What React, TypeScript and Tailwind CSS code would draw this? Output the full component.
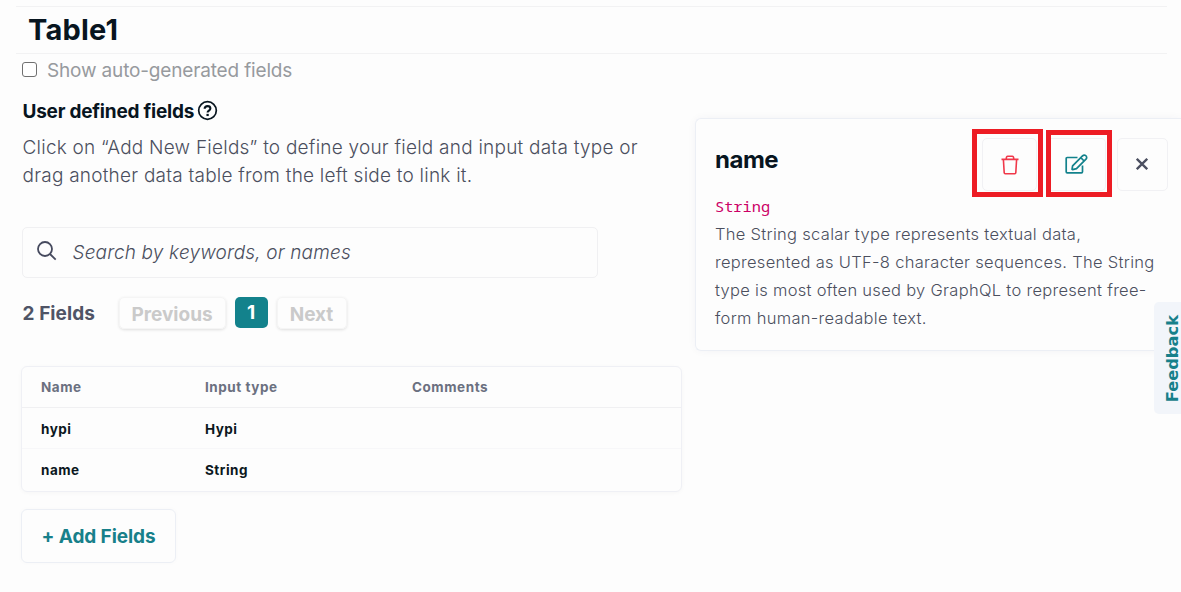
import React from "react";

const rows = [
  { name: "hypi", type: "Hypi" },
  { name: "name", type: "String" },
];

function HelpIcon() {
  return (
    <svg className="ml-[2px] -mt-[3px] size-[23px] text-[#08151f]" viewBox="0 0 24 24" fill="none" stroke="currentColor">
      <circle cx="12" cy="12" r="9.200" strokeWidth="1.8" />
      <path d="M9 10.100c0-1.600 1.200-2.700 3-2.700s3 1 3 2.500c0 2.300-2.900 2.100-2.900 4.300" strokeWidth="2.200" />
      <path d="M12.100 15.500v2.300" strokeWidth="2.400" />
    </svg>
  );
}

function SearchIcon() {
  return (
    <svg className="-mt-[3px] size-[20px] shrink-0 text-[#464a5e]" viewBox="0 0 20 20" fill="none" stroke="currentColor" strokeWidth="1.8">
      <circle cx="8" cy="8" r="7" />
      <path d="M13 13 18.700 18.700" />
    </svg>
  );
}

function TrashIcon() {
  return (
    <svg className="h-[20px] w-[18px] text-[#f0384a]" viewBox="0 0 18 20" fill="none" stroke="currentColor" strokeWidth="1.6">
      <path d="M.5 4.400h17M5.200 4.400q0-3.200 1.500-3.200h4.600q1.500 0 1.500 3.200M2.400 4.500l.8 13.200q.1 1 1 1h9.600q.9 0 1-1l.8-13.200" />
    </svg>
  );
}

function EditIcon() {
  return (
    <svg className="-mt-px h-[20px] w-[23px] text-[#13828c]" viewBox="0 0 23 20" fill="none" stroke="currentColor" strokeWidth="1.7" strokeLinejoin="round">
      <path d="M12.500 3.500H2.200q-1 0-1 1v13.300q0 1 1 1h14.300q1 0 1-1V11.500" />
      <path d="m7.600 11.800 9.900-9.900q1.200-1.200 2.600-.7 1.600.7 1.600 2.200 0 1-.7 1.700l-9.500 9.500-3.900 1q-.6 0-.5-.6zM15.800 3.700l3.300 3.300" />
    </svg>
  );
}

function CloseIcon() {
  return (
    <svg className="-mt-px size-[12px] text-[#4b4f60]" viewBox="0 0 12 12" fill="none" stroke="currentColor" strokeWidth="2.300">
      <path d="m.8.8 10.400 10.400M11.200.8.8 11.200" />
    </svg>
  );
}

function FieldTable() {
  return (
    <div className="mt-[37px] ml-[21px] h-[126px] w-[661px] rounded-md border border-[#eff0f5] shadow-[0_1px_4px_rgba(0,0,0,0.03)]">
      <div className="grid h-[41px] grid-cols-[164px_207px_1fr] items-center border-b border-[#f0f0f2] pl-[19px] text-[13.500px] font-bold tracking-[0.550px] text-[#6b7080]">
        <span>Name</span>
        <span>Input type</span>
        <span>Comments</span>
      </div>
      {rows.map((row) => (
        <div key={row.name} className="grid h-[41px] grid-cols-[164px_207px_1fr] items-center border-b border-[#f7f7f9] pt-[2px] pl-[19px] text-[13.500px] font-bold tracking-[0.500px] text-[#0b1720] last:border-b-0">
          <span>{row.name}</span>
          <span>{row.type}</span>
          <span />
        </div>
      ))}
    </div>
  );
}

function DetailCard() {
  return (
    <section className="mt-[32px] flex h-[233px] flex-1 flex-col rounded-l-md border border-r-0 border-[#eceff5] pl-[19px] shadow-[0_0_9px_rgba(30,40,90,0.045)]">
      <div className="flex h-[77px] items-start">
        <h2 className="mt-[24px] w-[257px] shrink-0 text-[24px] leading-[34px] font-bold tracking-[-0.500px] text-[#08151f]">name</h2>
        <div className="mt-[10px] flex h-[68px] w-[71px] shrink-0 border-[5px] border-[#ed1c24] pt-[4px] pl-[5px]">
          <button aria-label="Delete" className="flex h-[53px] w-[55px] items-center justify-center rounded-[5px] border border-[#f1f1f4]"><TrashIcon /></button>
        </div>
        <div className="mt-[11px] ml-[3px] flex h-[67px] w-[66px] shrink-0 border-[5px] border-[#ed1c24] pt-[3px]">
          <button aria-label="Edit" className="flex h-[53px] w-[55px] items-center justify-center rounded-r-[5px] border border-l-0 border-[#f1f1f4] pr-[3px]"><EditIcon /></button>
        </div>
        <button aria-label="Close" className="mt-[19px] ml-[5px] flex h-[53px] w-[51px] shrink-0 items-center justify-center rounded-[5px] border border-[#f1f1f4] pr-[2px]"><CloseIcon /></button>
      </div>
      <code className="block h-[24px] font-['Noto_Sans_Mono','DejaVu_Sans_Mono',monospace] text-[15.300px] leading-[20px] text-[#cc0066]">String</code>
      <p className="text-[16.500px] leading-[28px] font-light tracking-[0.300px] whitespace-nowrap text-[#4b4f5e]">
        The String scalar type represents textual data,<br />
        represented as UTF-8 character sequences. The String<br />
        type is most often used by GraphQL to represent free-<br />
        form human-readable text.
      </p>
    </section>
  );
}

export default function App() {
  return (
    <main className="relative h-[592px] w-[1181px] overflow-hidden bg-[#fdfdfd] pt-[6px] font-['Inter','Liberation_Sans',sans-serif]">
      <header className="mr-[14px] ml-4 flex h-[48px] items-center border-y border-[#f2f2f3] pb-[2px] pl-[12px]">
        <h1 className="text-[29px] leading-none font-bold tracking-[0.200px] text-[#08151f]">Table1</h1>
      </header>
      <label className="ml-[22px] flex h-[32px] items-center text-[19px] tracking-[-0.160px] text-[#979a9e]">
        <input type="checkbox" className="mt-[-2px] mr-[10px] h-[15px] w-[15px] appearance-none rounded-[3px] border border-[#707070] bg-white" />
        <span className="mt-[2px]">Show auto-generated fields</span>
      </label>
      <div className="flex items-start">
        <div className="w-[695px] shrink-0">
          <div className="ml-[23px] flex h-[48px] items-center pt-[4px] text-[19px] font-bold text-[#08151f]">
            <h3 className="-ml-[0.500px] tracking-[-0.220px]">User defined fields</h3><HelpIcon />
          </div>
          <p className="ml-[22.500px] text-[19px] leading-[28px] font-light tracking-[0.230px] whitespace-nowrap text-[#4b4f5e]">
            Click on “Add New Fields” to define your field and input data type or<br />
            drag another data table from the left side to link it.
          </p>
          <div className="mt-[37px] ml-[22px] flex h-[51px] w-[576px] items-center rounded-[5px] border border-[#f0f0f2] pl-[14px]">
            <SearchIcon />
            <span className="mt-px ml-[15.500px] text-[19px] font-light tracking-[0.170px] text-[#4b4f5e] italic">Search by keywords, or names</span>
          </div>
          <div className="mt-[18px] ml-[22.500px] flex h-[33px] items-center text-[19px] font-bold">
            <span className="w-[96px] pt-[3px] tracking-[0.080px] text-[#4f5466]">2 Fields</span>
            <button className="h-[32px] w-[107px] rounded-[5px] border border-[#f5f5f5] pt-[3px] text-[#cacaca] shadow-[0_1px_3px_rgba(0,0,0,0.12)]">Previous</button>
            <button className="ml-[9px] h-[31px] w-[33px] rounded-[5px] bg-[#13828c] pt-[2px] text-white">1</button>
            <button className="ml-[9px] h-[32px] w-[70px] rounded-[5px] border border-[#f5f5f5] pt-[3px] text-[#cacaca] shadow-[0_1px_3px_rgba(0,0,0,0.12)]">Next</button>
          </div>
          <FieldTable />
          <button className="mt-[17px] ml-[21px] h-[54px] w-[155px] rounded-md border border-[#eceff5] pt-[2px] text-[19px] font-bold tracking-[-0.080px] text-[#17808a] shadow-[0_0_5px_rgba(30,40,90,0.025)]">+ Add Fields</button>
        </div>
        <DetailCard />
      </div>
      <aside className="absolute top-[302px] right-0 flex h-[112px] w-[27px] items-center justify-center rounded-l-[5px] bg-[#f2f5fa]">
        <span className="mt-px ml-[10px] rotate-180 font-['DejaVu_Sans',sans-serif] text-[16.300px] leading-[18px] font-bold text-[#17808a] [writing-mode:vertical-rl]">Feedback</span>
      </aside>
    </main>
  );
}
